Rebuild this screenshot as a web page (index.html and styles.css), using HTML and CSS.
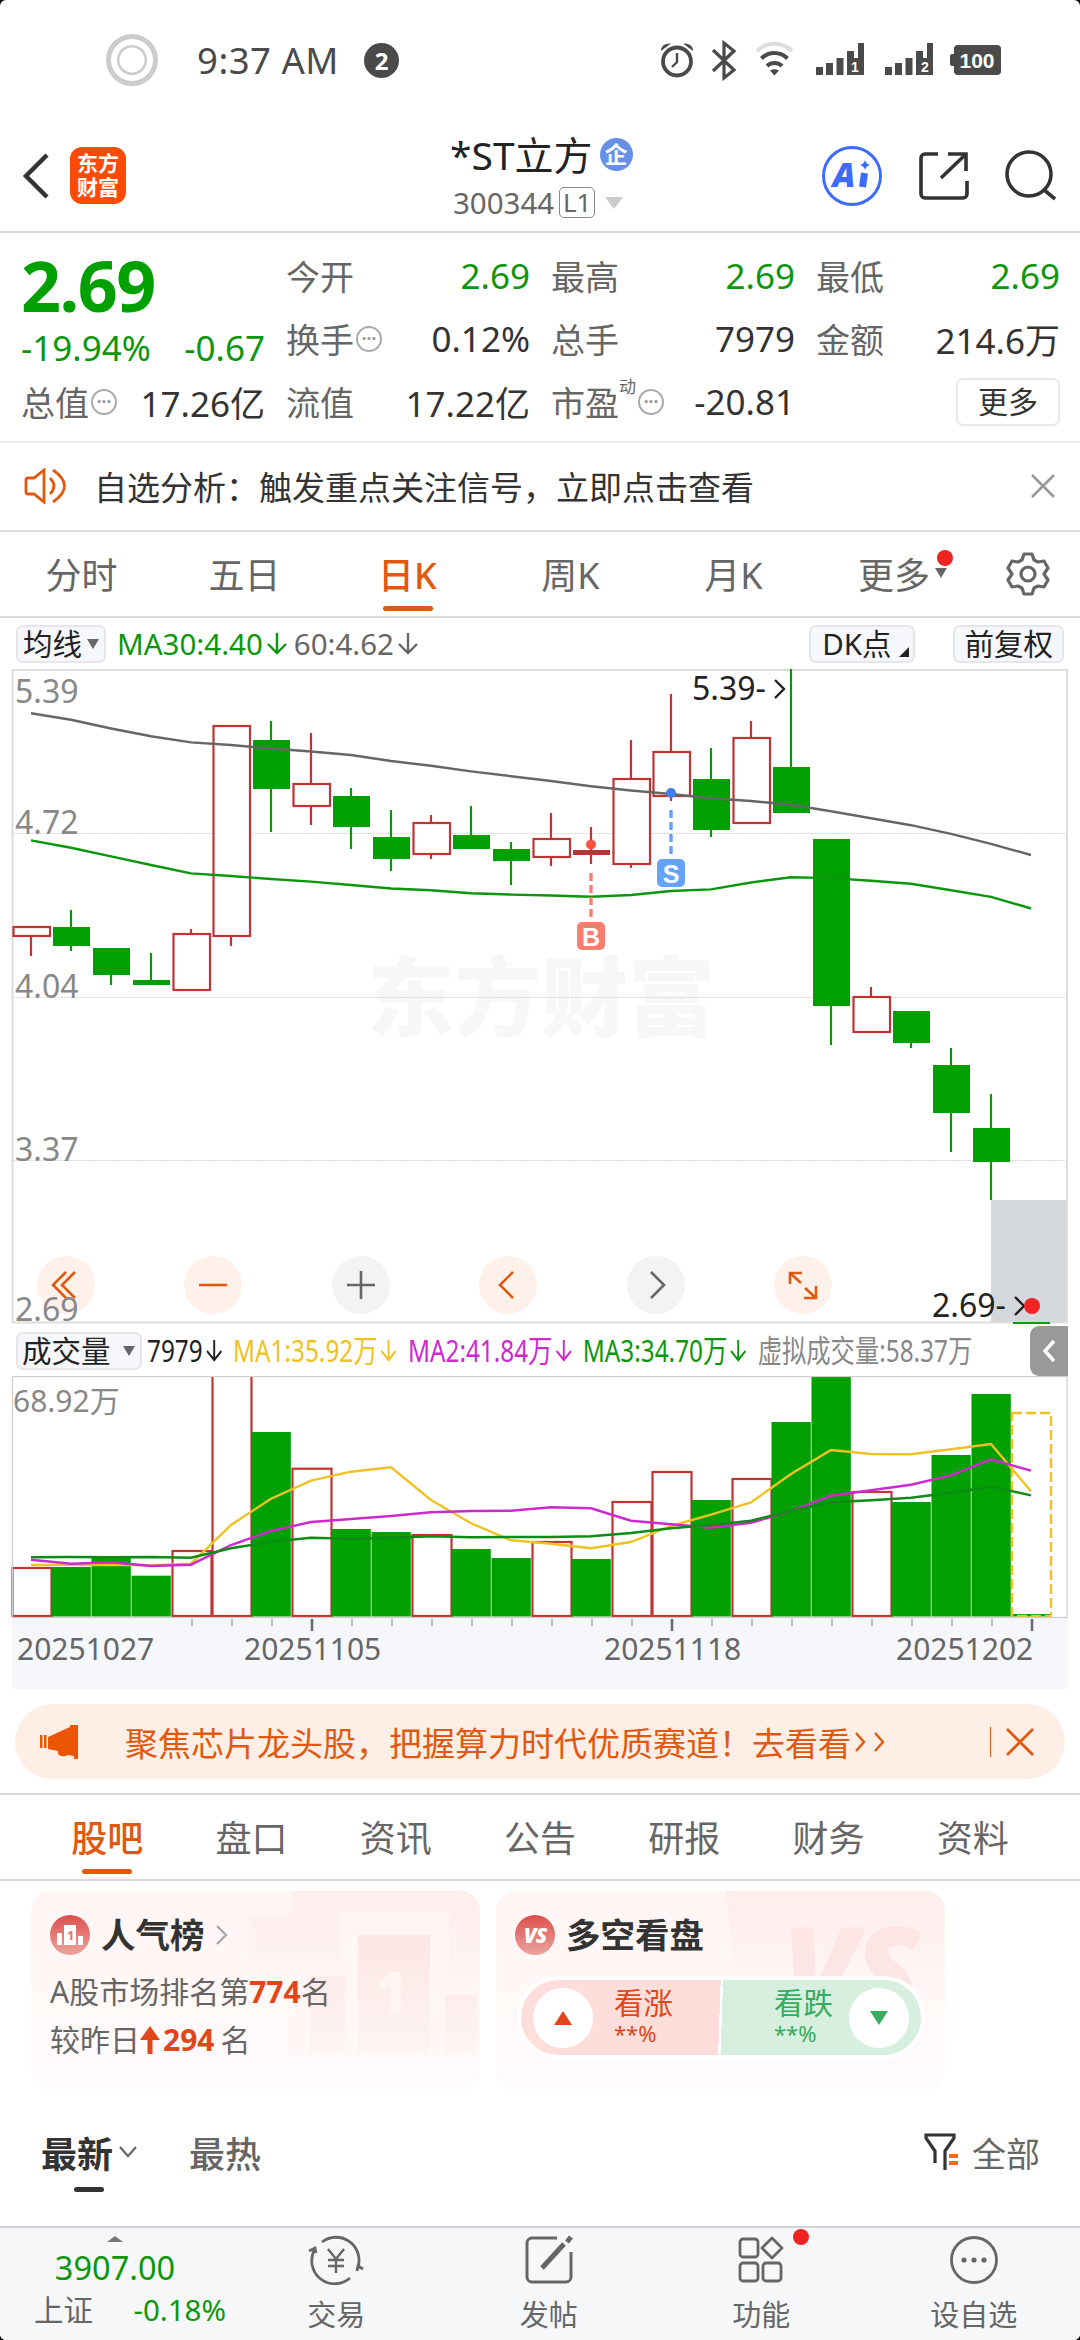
FILE: index.html
```html
<!DOCTYPE html>
<html lang="zh-CN">
<head>
    <meta charset="UTF-8">
    <title>*ST立方 300344</title>
    <link rel="stylesheet" href="styles.css">
</head>
<body>
    <div class="page">
        <!-- status bar -->
        <div class="status-bar">
            <svg class="status-ring" width="52" height="52" viewBox="0 0 52 52" fill="none" stroke="#ccc">
                <circle cx="26" cy="26" r="23.5" stroke-width="5"/>
                <circle cx="26" cy="26" r="13.8" stroke-width="2.5"/>
            </svg>
            <span class="status-time">9:37 AM</span>
            <span class="status-count">2</span>
            <svg class="status-icons" width="350" height="44" viewBox="655 38 350 44">
                <g fill="none" stroke="#4a4a4a" stroke-width="3.8">
                    <circle cx="677" cy="61.500" r="14"/>
                    <path d="M677 53v9l-5 5" stroke-width="2.400"/>
                    <path d="M713 50l21 20-10 8V43l10 8-21 20" stroke-width="3.200"/>
                </g>
                <path d="M661 51q0-8 10-7.500zM693 51q0-8-10-7.500z" fill="#4a4a4a"/>
                <g fill="none" stroke="#4a4a4a" stroke-width="4">
                    <path d="M757 51a25 25 0 0 1 35 0" stroke="#ddd"/>
                    <path d="M761.500 58.500a18 18 0 0 1 26 0M767 66a11 11 0 0 1 15 0"/>
                </g>
                <path d="M770 70.500q4.500-2.500 9 0l-4.500 5z" fill="#4a4a4a"/>
                <g fill="#4a4a4a">
                    <path d="M816 67h7v8h-7zM826 63h7v12h-7zM836.500 58h7v17h-7zM847 51h7v7h4V43h6v32h-17z"/>
                    <path d="M885 67h7v8h-7zM895 63h7v12h-7zM905.500 58h7v17h-7zM916 51h7v7h4V43h6v32h-17z"/>
                    <rect x="954" y="45" width="47" height="30" rx="4"/>
                    <rect x="950" y="54" width="6" height="12" rx="2"/>
                </g>
                <g class="status-text">
                    <text x="855" y="72" font-size="14">1</text>
                    <text x="925" y="72" font-size="14">2</text>
                    <text x="977" y="68" font-size="21">100</text>
                </g>
            </svg>
        </div>

        <!-- title bar -->
        <div class="header">
            <svg class="back" width="28" height="46" viewBox="0 0 28 46" fill="none" stroke="#333" stroke-width="4.500"><path d="M25 2L4 23l21 21"/></svg>
            <div class="logo"><span>东方</span><span>财富</span></div>
            <div class="title">
                <div class="name">*ST立方<span class="corp">企</span></div>
                <div class="code">300344<span class="level">L1</span><i class="tri-down light"></i></div>
            </div>
            <svg class="header-icons" width="240" height="64" viewBox="820 144 240 64" fill="none" stroke="#333" stroke-width="3.600">
                <circle cx="852" cy="176" r="28.500" stroke="#3d6bfb" stroke-width="3"/>
                <text x="844" y="187" class="ai-text">A</text>
                <path d="M864.500 173l-2 14" stroke="#3d6bfb" stroke-width="7" stroke-linecap="butt"/>
                <path d="M865 160q1 4 5 5-4 1-5 5-1-4-5-5 4-1 5-5z" fill="#3d6bfb" stroke="none"/>
                <path d="M938 154h-13a4 4 0 0 0-4 4v36a4 4 0 0 0 4 4h38a4 4 0 0 0 4-4v-13M941 178l24-23M948 154h18v17"/>
                <circle cx="1029" cy="174" r="22"/>
                <path d="M1043 189l12 10"/>
            </svg>
        </div>

        <!-- quote -->
        <div class="quote">
            <div class="quote-main">
                <div class="price">2.69</div>
                <div class="change"><span>-19.94%</span><span>-0.67</span></div>
                <div class="cell"><label>总值<i class="more-dot">···</i></label><b>17.26亿</b></div>
            </div>
            <div class="quote-grid">
                <div class="cell"><label>今开</label><b class="down">2.69</b></div>
                <div class="cell"><label>最高</label><b class="down">2.69</b></div>
                <div class="cell"><label>最低</label><b class="down">2.69</b></div>
                <div class="cell"><label>换手<i class="more-dot">···</i></label><b>0.12%</b></div>
                <div class="cell"><label>总手</label><b>7979</b></div>
                <div class="cell"><label>金额</label><b>214.6万</b></div>
                <div class="cell"><label>流值</label><b>17.22亿</b></div>
                <div class="cell"><label>市盈<sup>动</sup><i class="more-dot">···</i></label><b>-20.81</b></div>
                <div class="cell more"><button class="more-btn">更多</button></div>
            </div>
        </div>

        <!-- notice -->
        <div class="notice">
            <svg width="44" height="36" viewBox="0 0 44 36" fill="none" stroke="#e0590f" stroke-width="2.800">
                <path d="M20 2v32L10 26H4q-2 0-2-2V12q0-2 2-2h6zM26 10q8 8 0 16M29 2q23 16 0 32"/>
            </svg>
            <span>自选分析：触发重点关注信号，立即点击查看</span>
            <svg width="24" height="24" viewBox="0 0 24 24" stroke="#999" stroke-width="2.600"><path d="M1 1l22 22M23 1L1 23"/></svg>
        </div>

        <!-- period tabs -->
        <div class="period-tabs">
            <span>分时</span>
            <span>五日</span>
            <span class="active">日K</span>
            <span>周K</span>
            <span>月K</span>
            <span class="more-tab">更多<i class="tri-down"></i><i class="red-dot"></i></span>
            <svg width="44" height="44" viewBox="0 0 44 44" fill="none" stroke="#666" stroke-width="3.200" stroke-linejoin="round">
                <path d="M18 2h8l2 6 4 2 6-1 4 7-4 6 4 6-4 7-6-1-4 2-2 6h-8l-2-6-4-2-6 1-4-7 4-6-4-6 4-7 6 1 4-2z"/>
                <circle cx="22" cy="22" r="7"/>
            </svg>
        </div>

        <div class="toolbar">
            <button class="tool-btn ma-btn">均线<i class="tri-down"></i></button>
            <span class="ma30">MA30:4.40<svg class="arrow" viewBox="0 0 20 22"><path d="M10 0v20M1 11l9 9 9-9"/></svg></span>
            <span class="ma60">60:4.62<svg class="arrow" viewBox="0 0 20 22"><path d="M10 0v20M1 11l9 9 9-9"/></svg></span>
            <button class="tool-btn dk-btn">DK点<i class="corner"></i></button>
            <button class="tool-btn">前复权</button>
        </div>

        <!-- K line -->
        <svg class="kline" width="1080" height="656" viewBox="0 669 1080 656">
            <text x="367" y="1030" class="watermark">东方财富</text>
            <path class="grid" d="M13 833.500H1067M13 997.500H1067M13 1160.500H1067"/>
            <rect x="991" y="1200" width="76" height="123" fill="#d4d7dc"/>
            <rect class="frame" x="12.500" y="670" width="1054.500" height="652.500"/>
            <g class="controls">
                <circle cx="66" cy="1285" r="29"/>
                <circle cx="213" cy="1285" r="29"/>
                <circle cx="361" cy="1285" r="29" class="gray"/>
                <circle cx="508" cy="1285" r="29"/>
                <circle cx="656" cy="1285" r="29" class="gray"/>
                <circle cx="803" cy="1285" r="29"/>
                <path d="M66 1272l-13 13 13 13M75 1272l-13 13 13 13M199 1285h28M513 1272l-13 13 13 13"/>
                <path d="M790 1284v-11h12M790 1273l11 10M805 1288l11 10M804 1298h12v-12"/>
                <path d="M347 1285h28M361 1271v28M651 1272l13 13-13 13" class="gray"/>
            </g>
            <g class="axis-label">
                <text x="15" y="702.500">5.39</text>
                <text x="15" y="834">4.72</text>
                <text x="15" y="997.500">4.04</text>
                <text x="15" y="1161">3.37</text>
                <text x="15" y="1320.500">2.69</text>
            </g>
            <g id="candles"></g>
            <polyline id="ma60" class="line" stroke="#666"/>
            <polyline id="ma30" class="line" stroke="#0c960c"/>
            <g class="marker">
                <circle cx="591" cy="844.500" r="5" fill="#f9523f"/>
                <path d="M591 873v47" stroke="#fa7e70"/>
                <rect x="577" y="922" width="28" height="28" rx="5" fill="#fa7e70"/>
                <text x="591" y="945.500">B</text>
                <circle cx="671" cy="793" r="5" fill="#3c82ee"/>
                <path d="M671 810v47" stroke="#64a2fb"/>
                <rect x="657" y="859" width="28" height="28" rx="5" fill="#64a2fb"/>
                <text x="671" y="882.500">S</text>
            </g>
            <g class="extreme">
                <text x="692" y="700">5.39-</text>
                <text x="932" y="1317">2.69-</text>
                <path d="M775 680l9 9-9 9M1015 1297l9 9-9 9"/>
            </g>
            <circle cx="1032" cy="1306" r="8" fill="#f12222"/>
        </svg>

        <!-- volume -->
        <div class="vol-bar">
            <button class="tool-btn vol-btn">成交量<i class="tri-down"></i></button>
            <div class="vol-info">
                <span class="v0">7979<svg class="arrow" viewBox="0 0 20 22"><path d="M10 0v20M1 11l9 9 9-9"/></svg></span>
                <span class="v1">MA1:35.92万<svg class="arrow" viewBox="0 0 20 22"><path d="M10 0v20M1 11l9 9 9-9"/></svg></span>
                <span class="v2">MA2:41.84万<svg class="arrow" viewBox="0 0 20 22"><path d="M10 0v20M1 11l9 9 9-9"/></svg></span>
                <span class="v3">MA3:34.70万<svg class="arrow" viewBox="0 0 20 22"><path d="M10 0v20M1 11l9 9 9-9"/></svg></span>
                <span class="v4">虚拟成交量:58.37万</span>
            </div>
            <div class="vol-toggle">
                <svg width="14" height="24" viewBox="0 0 14 24" fill="none" stroke="#fff" stroke-width="3.500"><path d="M12 2L3 12l9 10"/></svg>
            </div>
        </div>
        <svg class="volume" width="1080" height="313" viewBox="0 1376 1080 313">
            <rect x="12" y="1618" width="1055.500" height="71" fill="#f6f7fa"/>
            <g id="bars"></g>
            <rect class="frame" x="12.500" y="1376.500" width="1054.500" height="241"/>
            <polyline id="vma1" class="line" stroke="#efc224"/>
            <polyline id="vma2" class="line" stroke="#ce28ce"/>
            <polyline id="vma3" class="line" stroke="#0c8c14"/>
            <text x="13" y="1412" class="vol-max">68.92万</text>
            <g id="ticks"></g>
            <g class="dates">
                <text x="17" y="1660">20251027</text>
                <text x="244" y="1660">20251105</text>
                <text x="604" y="1660">20251118</text>
                <text x="896" y="1660">20251202</text>
            </g>
        </svg>

        <!-- ad -->
        <div class="banner">
            <svg width="40" height="34" viewBox="0 0 40 34" fill="#ec5603"><path d="M0 10h2.500v13H0zM4 10h2.500v13H4zM8 12L30 2V0h8v34h-4v-3l-6-1-2 1q-6 1-8-2v-3l-10-2z"/></svg>
            <span class="banner-text">聚焦芯片龙头股，把握算力时代优质赛道！去看看</span>
            <svg width="34" height="20" viewBox="0 0 34 20" fill="none" stroke="#e0590f" stroke-width="2.400"><path d="M5 1l8 9-8 9M24 1l8 9-8 9"/></svg>
            <span class="banner-line"></span>
            <svg width="28" height="28" viewBox="0 0 28 28" stroke="#e0590f" stroke-width="2.800"><path d="M1 1l26 26M27 1L1 27"/></svg>
        </div>

        <div class="info-tabs">
            <span class="active">股吧</span>
            <span>盘口</span>
            <span>资讯</span>
            <span>公告</span>
            <span>研报</span>
            <span>财务</span>
            <span>资料</span>
        </div>

        <div class="cards">
            <div class="card rank">
                <svg class="card-bg" width="449" height="200" viewBox="0 0 449 200">
                    <defs>
                        <linearGradient id="badge" x2="0" y2="1"><stop stop-color="#db4f4b"/><stop offset="1" stop-color="#eda49f"/></linearGradient>
                        <linearGradient id="fade" x2="0" y2="1"><stop stop-color="#fdecea"/><stop offset="1" stop-color="#fdecea" stop-opacity="0"/></linearGradient>
                        <linearGradient id="podium" x2="0" y2="1"><stop stop-color="#fce6e4"/><stop offset="1" stop-color="#fdf5f4"/></linearGradient>
                    </defs>
                    <path d="M261 0h188v160H261V69h-43V25h43z" fill="url(#fade)" opacity=".7"/>
                    <path d="M308 20h111v68h30v76H258V69h50z" fill="#fff7f5" opacity=".8"/>
                    <path d="M327 44h72v120h-72zM279 85h35v79h-35zM414 104h32v60h-32z" fill="url(#podium)"/>
                    <text x="344" y="122" class="bg-one">1</text>
                </svg>
                <div class="card-title">
                    <svg width="40" height="40" viewBox="0 0 40 40">
                        <circle cx="20" cy="20" r="20" fill="url(#badge)"/>
                        <path d="M7 18h5v12H7zM14 10h12v20H14zM28 21h5v9h-5z" fill="#fff"/>
                        <text x="17" y="25" class="badge-one">1</text>
                    </svg>
                    <span>人气榜</span>
                    <svg width="12" height="20" viewBox="0 0 12 20" fill="none" stroke="#aaa" stroke-width="2.400"><path d="M1 1l9 9-9 9"/></svg>
                </div>
                <p>A股市场排名第<b>774</b>名</p>
                <p>较昨日<svg width="20" height="28" viewBox="0 0 20 28" fill="#e04618"><path d="M10 0l10 14h-7.500v14h-5V14H0z"/></svg><b>294</b> 名</p>
            </div>
            <div class="card versus">
                <svg class="card-bg" width="450" height="200" viewBox="0 0 450 200">
                    <path d="M230 0h220v120H243z" fill="url(#fade)" opacity=".8"/>
                    <text x="286" y="124" class="bg-vs">VS</text>
                </svg>
                <div class="card-title">
                    <svg width="40" height="40" viewBox="0 0 40 40">
                        <circle cx="20" cy="20" r="20" fill="url(#badge)"/>
                        <text x="20" y="28" class="badge-vs">VS</text>
                    </svg>
                    <span>多空看盘</span>
                </div>
                <div class="vote">
                    <div class="vote-up">
                        <i><svg width="20" height="16" viewBox="0 0 20 16"><path d="M10 1l9 14H1z" fill="#e04618"/></svg></i>
                        <div>看涨<small>**%</small></div>
                    </div>
                    <div class="vote-down">
                        <div>看跌<small>**%</small></div>
                        <i><svg width="20" height="16" viewBox="0 0 20 16"><path d="M10 15l9-14H1z" fill="#36ac5e"/></svg></i>
                    </div>
                </div>
            </div>
        </div>

        <div class="sort">
            <span class="newest">最新</span>
            <svg width="18" height="12" viewBox="0 0 18 12" fill="none" stroke="#666" stroke-width="2.200"><path d="M1 1l8 9 8-9"/></svg>
            <span class="hottest">最热</span>
            <svg class="funnel" width="36" height="38" viewBox="0 0 36 38" fill="none" stroke="#333" stroke-width="3.200">
                <path d="M11 30V18L2 5V2h28v3l-9 13v19"/>
                <path d="M25 23h9M25 30h9" stroke="#f56a1c" stroke-width="4"/>
            </svg>
            <span class="all">全部</span>
        </div>

        <!-- bottom nav -->
        <div class="bottom-nav">
            <div class="index">
                <i class="tri-up"></i>
                <div class="index-value">3907.00</div>
                <div class="index-row"><span>上证</span><b>-0.18%</b></div>
            </div>
            <div class="nav-item">
                <svg width="56" height="50" viewBox="0 0 56 50" fill="none" stroke="#666" stroke-width="2.800">
                    <path d="M14 7a23 23 0 0 1 36 25M42 43A23 23 0 0 1 7 14M1 16l6-3 1 5M49 36l1-5 5 3"/>
                    <path d="M20 14l8 10 8-10M28 24v14M20 25h16M20 31h16" stroke-width="2.400"/>
                </svg>
                <span>交易</span>
            </div>
            <div class="nav-item">
                <svg width="50" height="50" viewBox="0 0 50 50" fill="none" stroke="#666" stroke-width="3">
                    <path d="M33 3H8a5 5 0 0 0-5 5v34a5 5 0 0 0 5 5h34a5 5 0 0 0 5-5V17"/>
                    <path d="M18 33l22-24M43 7l4-5" stroke-width="5"/>
                </svg>
                <span>发帖</span>
            </div>
            <div class="nav-item">
                <svg width="48" height="50" viewBox="0 0 48 50" fill="none" stroke="#666" stroke-width="2.800">
                    <rect x="3" y="4" width="18" height="18" rx="3"/>
                    <rect x="3" y="28" width="18" height="18" rx="3"/>
                    <rect x="26" y="28" width="18" height="18" rx="3"/>
                    <path d="M35 3l10 10-10 10-10-10z" stroke-linejoin="round"/>
                </svg>
                <span>功能</span>
                <i class="red-dot"></i>
            </div>
            <div class="nav-item">
                <svg width="50" height="50" viewBox="0 0 50 50" fill="none" stroke="#666" stroke-width="2.800">
                    <circle cx="25" cy="25" r="22.500"/>
                    <g fill="#666" stroke="none"><circle cx="15" cy="25" r="2.600"/><circle cx="25" cy="25" r="2.600"/><circle cx="35" cy="25" r="2.600"/></g>
                </svg>
                <span>设自选</span>
            </div>
        </div>
    </div>
    <script src="chart.js"></script>
</body>
</html>
```
FILE: styles.css
```css
* {
    box-sizing: border-box;
}
html {
    background: #000;
}
body {
    margin: 0;
    width: 1080px;
    height: 2340px;
    overflow: hidden;
    font-family: "Noto Sans", "Noto Sans CJK SC", sans-serif;
    color: #333;
}
.page {
    height: 2340px;
    background: #fff;
    border-radius: 6px;
    overflow: hidden;
    display: flex;
    flex-direction: column;
}
.page > * {
    flex-shrink: 0;
}
svg {
    display: block;
}
i {
    font-style: normal;
}
button {
    font-family: inherit;
    padding: 0;
}

/* triangles and dots */
.tri-down {
    display: inline-block;
    border: 6px solid transparent;
    border-top: 10px solid #666;
    border-bottom: 0;
}
.tri-down.light {
    border-width: 12px 9px 0;
    border-top-color: #ccc;
}
.tri-up {
    border: 8px solid transparent;
    border-bottom: 6px solid #777;
    border-top: 0;
}
.red-dot {
    position: absolute;
    width: 16px;
    height: 16px;
    border-radius: 50%;
    background: #f12222;
}

/* status bar */
.status-bar {
    height: 120px;
    padding-left: 106px;
    display: flex;
    align-items: center;
}
.status-time {
    margin-left: 39px;
    font-size: 36.500px;
    line-height: 50px;
    color: #4a4a4a;
    width: 152px;
    letter-spacing: .5px;
    white-space: nowrap;
}
.status-count {
    margin-left: 15px;
    width: 35px;
    height: 35px;
    line-height: 35px;
    border-radius: 50%;
    background: #4a4a4a;
    color: #fff;
    font-size: 24px;
    font-weight: bold;
    text-align: center;
}
.status-icons {
    margin-left: 256px;
}
.status-text {
    fill: #fff;
    font-family: "Liberation Sans", sans-serif;
    font-weight: bold;
    text-anchor: middle;
}

/* title bar */
.header {
    height: 113px;
    border-bottom: 2px solid #d9d9d9;
    padding: 0 20px 0 22px;
    display: flex;
    align-items: center;
}
.logo {
    margin-left: 20px;
    width: 56px;
    height: 57px;
    border-radius: 12px;
    background: #ff4a05;
    color: #fff;
    font-size: 21px;
    font-weight: bold;
    line-height: 24px;
    padding-top: 4px;
    text-align: center;
}
.logo span {
    display: block;
}
.title {
    flex: 1;
    padding-left: 324px;
}
.name {
    height: 54px;
    font-size: 39px;
    line-height: 54px;
    color: #222;
    display: flex;
    align-items: center;
}
.corp {
    margin-left: 7px;
    width: 33px;
    height: 33px;
    line-height: 32px;
    border-radius: 50%;
    background: #6590e6;
    color: #fff;
    font-size: 23px;
    font-weight: bold;
    text-align: center;
}
.code {
    padding-left: 3px;
    height: 42px;
    font-size: 29.500px;
    line-height: 42px;
    color: #666;
    display: flex;
    align-items: center;
}
.level {
    margin: 0 10px 0 5px;
    width: 36px;
    height: 31px;
    line-height: 28px;
    border: 1.500px solid #888;
    border-radius: 5px;
    font-size: 26px;
    text-align: center;
}
.ai-text {
    fill: #3d6bfb;
    stroke: none;
    font-size: 34px;
    font-weight: 900;
    font-style: italic;
    text-anchor: middle;
}

/* quote */
.quote {
    height: 210px;
    border-bottom: 2px solid #eee;
    padding: 11px 20px 0 21px;
    display: flex;
    gap: 21px;
}
.quote-main {
    width: 244px;
}
.price {
    height: 80px;
    line-height: 82px;
    font-size: 70px;
    font-weight: bold;
    letter-spacing: -1.500px;
    color: #00a000;
}
.change {
    height: 46px;
    line-height: 48px;
    font-size: 35px;
    color: #0c960c;
    display: flex;
    justify-content: space-between;
}
.quote-grid {
    flex: 1;
    display: grid;
    grid-template-columns: repeat(3, 244px);
    grid-auto-rows: 63px;
    column-gap: 21px;
}
.cell {
    height: 63px;
    display: flex;
    align-items: center;
    justify-content: space-between;
    font-size: 35px;
}
.cell label {
    display: flex;
    align-items: center;
    color: #666;
    font-size: 34px;
}
.cell b {
    font-weight: normal;
}
.cell .down {
    color: #0c960c;
}
.cell sup {
    font-size: 17px;
    line-height: 20px;
    margin-top: -30px;
}
.more-dot {
    width: 26px;
    height: 26px;
    margin-left: 2px;
    border: 2px solid #aaa;
    border-radius: 50%;
    font-size: 17px;
    font-weight: bold;
    line-height: 21px;
    text-align: center;
    color: #999;
}
.cell.more {
    justify-content: flex-end;
}
.more-btn {
    width: 104px;
    height: 48px;
    background: #fff;
    border: 2px solid #e8e8e8;
    border-radius: 7px;
    font-size: 30px;
    line-height: 40px;
    color: #333;
}

/* notice */
.notice {
    height: 89px;
    border-bottom: 2px solid #ddd;
    padding: 0 25px 2px 24px;
    display: flex;
    align-items: center;
    font-size: 33px;
}
.notice span {
    flex: 1;
    margin-left: 26px;
}

/* period tabs */
.period-tabs {
    height: 86px;
    border-bottom: 2px solid #d9d9d9;
    display: flex;
    align-items: center;
    font-size: 36px;
    color: #666;
}
.period-tabs span {
    position: relative;
    width: 163px;
    height: 84px;
    line-height: 88px;
    text-align: center;
}
.period-tabs .more-tab {
    width: 191px;
    padding-right: 16px;
}
.more-tab .tri-down {
    margin-left: 5px;
    vertical-align: 11px;
}
.more-tab .red-dot {
    left: 122px;
    top: 18px;
}
.active {
    color: #e0590f;
    font-weight: 500;
}
.active::after {
    content: "";
    position: absolute;
    left: 50%;
    bottom: 5px;
    width: 50px;
    height: 5px;
    margin-left: -25px;
    border-radius: 3px;
    background: #e0590f;
}

/* toolbar above the chart */
.toolbar {
    height: 51px;
    padding: 0 16px;
    display: flex;
    align-items: center;
    font-size: 29px;
}
.tool-btn {
    height: 38px;
    padding: 0 9px;
    border: 2px solid #e4e6ea;
    border-radius: 7px;
    background: #f6f7fa;
    color: #222;
    font-size: 29.500px;
    line-height: 33px;
    display: flex;
    align-items: center;
    white-space: nowrap;
}
.ma-btn {
    padding: 0 5px;
}
.ma-btn .tri-down {
    margin-left: 5px;
}
.ma30, .ma60, .vol-info span {
    display: flex;
    align-items: center;
}
.ma30 {
    margin-left: 11px;
    color: #0c960c;
}
.ma60 {
    margin-left: 7px;
    color: #666;
}
.toolbar .ma30, .toolbar .ma60 {
    font-size: 29.500px;
}
.arrow {
    width: 20px;
    height: 22px;
    margin-left: 4px;
    fill: none;
    stroke: currentColor;
    stroke-width: 2.400;
}
.dk-btn {
    margin-left: auto;
    margin-right: 38px;
    padding: 0 4px 0 11px;
}
.corner {
    margin: 16px 0 0 8px;
    border-left: 10px solid transparent;
    border-bottom: 10px solid #222;
}

/* charts */
.grid {
    stroke: #d8d8d8;
    stroke-dasharray: 2 1;
}
.frame {
    fill: none;
    stroke: #ddd;
    stroke-width: 2;
}
.volume .frame {
    stroke: #ccc;
    stroke-width: 1.200;
}
.watermark {
    font-size: 87px;
    font-weight: 900;
    fill: #f7f7f7;
}
.axis-label {
    font-size: 32px;
    fill: #888;
}
.line {
    fill: none;
    stroke-width: 2.400;
}
.wick, .hollow {
    stroke-width: 2.200;
}
.wick.up, .hollow {
    stroke: #c03434;
}
.wick.down {
    stroke: #0c960c;
}
.hollow {
    fill: #fff;
}
.solid {
    fill: #00a000;
}
.doji {
    fill: #b93434;
}
.forecast {
    fill: none;
    stroke: #efc224;
    stroke-width: 2.400;
    stroke-dasharray: 10 4;
}
.controls circle {
    fill: #fef1ea;
}
.controls circle.gray {
    fill: #f3f3f3;
}
.controls path {
    fill: none;
    stroke: #e0590f;
    stroke-width: 2.600;
}
.controls path.gray {
    stroke: #666;
}
.marker path {
    stroke-width: 3.400;
    stroke-dasharray: 8 4;
}
.marker text {
    fill: #fff;
    font-family: "Liberation Sans", sans-serif;
    font-size: 25px;
    font-weight: bold;
    text-anchor: middle;
}
.extreme {
    font-size: 32px;
    fill: #222;
}
.extreme path {
    fill: none;
    stroke: #222;
    stroke-width: 2.400;
}

/* volume */
.vol-bar {
    height: 51px;
    padding-left: 16px;
    display: flex;
    align-items: center;
}
.vol-btn {
    width: 126px;
    padding: 0 4px;
}
.vol-btn .tri-down {
    margin-left: 12px;
}
.vol-info {
    width: 1020px;
    margin: 0 -200px 0 5px;
    display: flex;
    gap: 14px;
    font-size: 30.400px;
    line-height: 40px;
    transform: scaleX(.8);
    transform-origin: left;
    white-space: nowrap;
}
.v0 { color: #222; }
.v1 { color: #efc224; }
.v2 { color: #ce28ce; }
.v3 { color: #0c960c; }
.v4 { color: #888; }
.vol-toggle {
    margin-left: auto;
    margin-right: 12px;
    width: 38px;
    height: 50px;
    border-radius: 9px 0 0 9px;
    background: #999;
    display: flex;
    align-items: center;
    justify-content: center;
}
.vol-max {
    font-size: 30px;
    fill: #888;
}
.dates {
    font-size: 30px;
    fill: #666;
}
.tick {
    stroke: #aaa;
    stroke-width: 1.500;
}
.tick.major {
    stroke: #666;
    stroke-width: 2.500;
}

/* ad banner */
.banner {
    height: 75px;
    margin: 15px 15px 14px;
    padding: 0 31px 0 25px;
    border-radius: 38px;
    background: #fdeee6;
    color: #e0590f;
    display: flex;
    align-items: center;
    font-size: 33px;
}
.banner-text {
    margin-left: 45px;
}
.banner-line {
    margin-left: auto;
    margin-right: 15px;
    width: 1.500px;
    height: 30px;
    background: #e0590f;
}

/* info tabs */
.info-tabs {
    height: 88px;
    border-top: 2px solid #d9d9d9;
    border-bottom: 2px solid #d9d9d9;
    padding: 0 35px;
    display: flex;
    font-size: 36px;
    color: #666;
}
.info-tabs span {
    position: relative;
    width: 144.300px;
    line-height: 88px;
    text-align: center;
}

/* cards */
.cards {
    padding: 10px 31px 0;
    display: flex;
    gap: 16px;
}
.card {
    position: relative;
    width: 449px;
    height: 200px;
    padding: 24px 20px 0 19px;
    border-radius: 20px;
    background: linear-gradient(#fff5f4, #fffcfb);
    overflow: hidden;
}
.card > * {
    position: relative;
}
.card .card-bg {
    position: absolute;
    left: 0;
    top: 0;
}
.bg-one {
    font-size: 56px;
    font-weight: 900;
    fill: #fff5f3;
}
.bg-vs {
    font-size: 122px;
    font-weight: 900;
    font-style: italic;
    letter-spacing: -4px;
    fill: #fce3e1;
    opacity: .8;
}
.card-title {
    height: 40px;
    line-height: 40px;
    display: flex;
    align-items: center;
    font-size: 34.500px;
    font-weight: bold;
    gap: 11px;
}
.badge-one {
    font-size: 13px;
    font-weight: bold;
    fill: #e0726c;
}
.badge-vs {
    font-size: 21px;
    font-weight: 900;
    font-style: italic;
    letter-spacing: -1px;
    fill: #fff;
    text-anchor: middle;
}
.card p {
    margin: 0;
    height: 48px;
    line-height: 48px;
    font-size: 30px;
    color: #666;
    display: flex;
    align-items: center;
}
.card-title + p {
    margin-top: 13px;
}
.card p b {
    color: #e04618;
}
.card p svg + b {
    margin: 0 6px 0 3px;
}
.vote {
    width: 408px;
    height: 83px;
    margin: 21px 0 0 2px;
    border: 4px solid #fff;
    border-radius: 42px;
    background: linear-gradient(92deg, #fddedb 49.600%, #fff 49.600%, #fff 50.200%, #d6efde 50.200%);
    display: flex;
    font-size: 29.500px;
}
.vote-up, .vote-down {
    flex: 1;
    display: flex;
    align-items: center;
    line-height: 32px;
    color: #e04618;
}
.vote-up {
    padding-left: 12px;
    gap: 21px;
}
.vote-down {
    padding-right: 12px;
    gap: 16px;
    justify-content: flex-end;
    color: #36ac5e;
}
.vote i {
    width: 60px;
    height: 60px;
    border-radius: 50%;
    background: #fff;
    display: flex;
    align-items: center;
    justify-content: center;
}
.vote small {
    display: block;
    font-size: 22px;
    line-height: 29px;
}

/* sort row */
.sort {
    height: 135px;
    padding: 0 40px 13px 41px;
    display: flex;
    align-items: center;
    font-size: 36px;
    color: #666;
}
.newest {
    position: relative;
    color: #333;
    font-weight: bold;
    margin-right: 6px;
}
.newest::after {
    content: "";
    position: absolute;
    left: 33px;
    bottom: -13px;
    width: 30px;
    height: 5px;
    border-radius: 3px;
    background: #333;
}
.hottest {
    font-weight: 500;
    margin-left: 52px;
}
.funnel {
    margin-left: auto;
    margin-right: 12px;
}
.all {
    font-size: 34px;
}

/* bottom nav */
.bottom-nav {
    height: 114px;
    border-top: 2px solid #d0d4d9;
    background: #f6f7f9;
    display: flex;
}
.index {
    width: 230px;
    padding-top: 8px;
    display: flex;
    flex-direction: column;
    align-items: center;
}
.index-value {
    margin-top: 1px;
    font-size: 32.500px;
    line-height: 50px;
    color: #0c960c;
}
.index-row {
    width: 192px;
    margin-left: 30px;
    display: flex;
    justify-content: space-between;
    font-size: 29.500px;
    line-height: 34px;
    color: #666;
}
.index-row b {
    color: #0c960c;
    font-weight: normal;
}
.nav-item {
    position: relative;
    width: 212.500px;
    padding-top: 7px;
    display: flex;
    flex-direction: column;
    align-items: center;
    font-size: 29px;
    line-height: 34px;
    color: #666;
}
.nav-item span {
    margin-top: 13px;
}
.nav-item .red-dot {
    left: 138px;
    top: 1px;
}
```
FILE: chart.js
```js
const START_X = 31;
const STEP = 40;

// high, body top, body bottom, low, direction
const candles = [
    [926, 927, 936, 956, 'up'],
    [910, 927, 946, 951, 'down'],
    [948, 948, 975, 985, 'down'],
    [953, 980, 985, 985, 'down'],
    [929, 934, 990, 990, 'up'],
    [726, 726, 936, 946, 'up'],
    [721, 740, 789, 832, 'down'],
    [733, 784, 806, 825, 'up'],
    [788, 796, 827, 849, 'down'],
    [810, 837, 859, 871, 'down'],
    [815, 823, 854, 859, 'up'],
    [806, 835, 849, 849, 'down'],
    [842, 849, 861, 885, 'down'],
    [813, 839, 857, 866, 'up'],
    [827, 850, 855, 864, 'doji'],
    [740, 779, 864, 868, 'up'],
    [694, 752, 796, 801, 'up'],
    [748, 779, 830, 837, 'down'],
    [721, 738, 823, 823, 'up'],
    [669, 767, 813, 813, 'down'],
    [839, 839, 1006, 1045, 'down'],
    [987, 997, 1032, 1033, 'up'],
    [1011, 1011, 1043, 1048, 'down'],
    [1048, 1065, 1113, 1152, 'down'],
    [1094, 1128, 1162, 1200, 'down'],
    [1322, 1322, 1324, 1324, 'down']
];

const volumes = [1568, 1567, 1558, 1575.7, 1551, 1370, 1432, 1468.7, 1529, 1532, 1535, 1549, 1558,
    1542, 1559, 1502, 1472, 1500, 1479, 1422, 1377, 1492, 1502, 1455, 1394, 1614];

const lines = {
    ma60: [713.3, 719.8, 728.5, 736.3, 742.4, 745, 748.5, 751.5, 755, 761, 765.8, 771.4, 776.2, 781,
        786.2, 790.5, 794, 798.3, 801, 804.8, 811.3, 818.3, 825.2, 833.9, 843.9, 855],
    ma30: [840.4, 847.8, 856.4, 865, 873.4, 876, 879, 881.6, 885, 888.5, 890.3, 893.3, 894.6, 895.5,
        896.8, 895, 891, 889.4, 882.5, 877.3, 878.1, 880.7, 883.8, 890.3, 896.8, 908.5],
    vma1: [1565, 1565, 1564.7, 1565.3, 1563.7, 1525, 1498.7, 1480.7, 1471.7, 1467.3, 1500, 1523.3, 1540.3,
        1543.7, 1548.3, 1542, 1526, 1514.7, 1502.3, 1474, 1450, 1454, 1454.3, 1449.3, 1444, 1491.3],
    vma2: [1559.7, 1563.7, 1562.3, 1566, 1564.7, 1545, 1531, 1522, 1519, 1516, 1512.3, 1511, 1510.7,
        1507.3, 1508.3, 1520.7, 1524.3, 1527.7, 1522.7, 1511, 1495.7, 1490.3, 1484.7, 1475.3, 1459.3, 1470.7],
    vma3: [1557.3, 1557, 1557.3, 1557, 1557.7, 1548.3, 1541.7, 1537.7, 1538.7, 1537.7, 1536.3, 1537.3, 1537,
        1537, 1536.3, 1533, 1528.3, 1525, 1520.7, 1511, 1502.3, 1500.3, 1497.7, 1492.7, 1486.7, 1495.3]
};

let candleHtml = '';
let barHtml = '';
let tickHtml = '';

candles.forEach(([high, top, bottom, low, dir], i) => {
    const x = START_X + i * STEP;
    const color = dir === 'down' ? 'down' : 'up';
    candleHtml += `<path class="wick ${color}" d="M${x} ${high}V${low}"/>`;
    if (dir === 'up') {
        candleHtml += `<rect class="hollow" x="${x - 17.5}" y="${top}" width="36.5" height="${bottom - top}"/>`;
    } else {
        const type = dir === 'doji' ? 'doji' : 'solid';
        candleHtml += `<rect class="${type}" x="${x - 18}" y="${top}" width="37" height="${bottom - top}"/>`;
    }

    // volume bar
    const y = volumes[i];
    if (dir === 'up') {
        barHtml += `<rect class="hollow" x="${x - 18.5}" y="${y}" width="39" height="${1616 - y}"/>`;
    } else {
        barHtml += `<rect class="solid" x="${x - 19.5}" y="${y}" width="39.3" height="${1616.5 - y}"/>`;
    }

    if (i > 3) {
        const major = i % 9 === 7;
        tickHtml += `<path class="tick ${major ? 'major' : ''}" d="M${x + 1} 1619V${major ? 1631 : 1626}"/>`;
    }
});
barHtml += '<rect class="forecast" x="1012" y="1413" width="39" height="203"/>';

document.getElementById('candles').innerHTML = candleHtml;
document.getElementById('bars').innerHTML = barHtml;
document.getElementById('ticks').innerHTML = tickHtml;

for (const id in lines) {
    const points = lines[id].map((y, i) => `${START_X + i * STEP},${y}`);
    document.getElementById(id).setAttribute('points', points.join(' '));
}
```
